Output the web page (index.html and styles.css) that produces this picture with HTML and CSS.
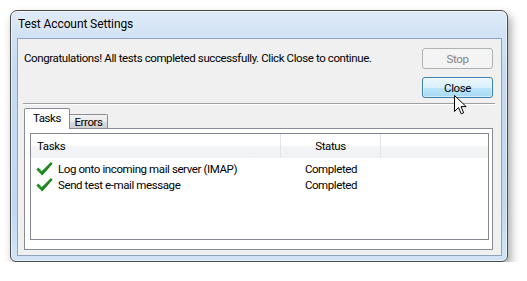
FILE: index.html
```html
<!DOCTYPE html>
<html>
<head>
<meta charset="utf-8">
<title>Test Account Settings</title>
<link rel="stylesheet" href="styles.css">
</head>
<body>
<div class="window">
  <div class="titlebar"><span class="title">Test Account Settings</span></div>
  <div class="client">
    <div class="top">
      <p class="message">Congratulations! All tests completed successfully. Click Close to continue.</p>
      <div class="buttons">
        <button class="btn" disabled>Stop</button>
        <button class="btn btn-hot">Close</button>
      </div>
    </div>
    <div class="separator"></div>
    <div class="tabs">
      <div class="tab tab-active">Tasks</div>
      <div class="tab tab-idle">Errors</div>
    </div>
    <div class="panel">
      <div class="list">
        <div class="list-head">
          <div class="hcol col-task">Tasks</div>
          <div class="hcol col-status">Status</div>
          <div class="hcol col-rest"></div>
        </div>
        <div class="rows">
          <div class="row">
            <div class="cell col-task">
              <svg class="check" width="17" height="14" viewBox="0 0 17 14"><path d="M0.3 7.6 L2.4 5.6 L5.9 9.3 L14.8 0.3 L16.6 1.8 L6.1 13.4 Z" fill="#239123"/><path d="M5.9 9.3 L14.8 0.3 L16.6 1.8 L6.1 13.4 Z" fill="#1b7d1b" opacity=".55"/></svg>
              <span>Log onto incoming mail server (IMAP)</span>
            </div>
            <div class="cell col-status">Completed</div>
          </div>
          <div class="row">
            <div class="cell col-task">
              <svg class="check" width="17" height="14" viewBox="0 0 17 14"><path d="M0.3 7.6 L2.4 5.6 L5.9 9.3 L14.8 0.3 L16.6 1.8 L6.1 13.4 Z" fill="#239123"/><path d="M5.9 9.3 L14.8 0.3 L16.6 1.8 L6.1 13.4 Z" fill="#1b7d1b" opacity=".55"/></svg>
              <span>Send test e-mail message</span>
            </div>
            <div class="cell col-status">Completed</div>
          </div>
        </div>
      </div>
    </div>
  </div>
  <svg class="cursor" width="13" height="20" viewBox="0 0 13 20"><path d="M0.5 0.5 L0.5 16.5 L4.5 12.5 L7.2 18.8 L9.6 17.8 L7 11.6 L12.2 11.6 Z" fill="#fff" stroke="#000" stroke-width="1" stroke-linejoin="miter"/></svg>
</div>
</body>
</html>
```
FILE: styles.css
```css
* { box-sizing: border-box; }

body {
  margin: 0;
  background: #ffffff;
  font-family: Roboto, "Noto Sans", sans-serif;
  font-size: 11.5px;
  letter-spacing: -0.4px;
  color: #000;
}

.window {
  position: relative;
  margin: 10px 0 0 10px;
  width: 498px;
  height: 252px;
  border: 1px solid #4a4a4a;
  border-radius: 7px 7px 6px 6px;
  background: linear-gradient(to bottom, #dfeaf7 0px, #d2e3f5 22px, #c6dbf2 60px, #c2d8f1 200px, #cfe2f6 240px);
  box-shadow: 3px 5px 10px rgba(0, 0, 0, 0.35), inset 0 0 0 1px rgba(255, 255, 255, 0.55);
  display: flex;
  flex-direction: column;
  padding: 0 5px 5px 6px;
}

.titlebar {
  height: 27px;
  display: flex;
  align-items: center;
  padding-left: 1px;
}

.title {
  font-size: 12px;
  letter-spacing: -0.1px;
  line-height: 15px;
  color: #000;
  text-shadow: 0 0 6px rgba(255, 255, 255, 0.9);
}

.client {
  flex: 1;
  border: 1px solid #8fa3bc;
  background: #f0f0f0;
  display: flex;
  flex-direction: column;
  padding: 9px 8px 5px 6px;
}

.top {
  display: flex;
  justify-content: space-between;
  align-items: flex-start;
}

.message {
  margin: 3px 0 0 0;
  line-height: 15px;
  white-space: nowrap;
}

.buttons {
  display: flex;
  flex-direction: column;
  gap: 8px;
}

.btn {
  width: 71px;
  height: 21px;
  padding: 0;
  border: 1px solid #707070;
  border-radius: 3px;
  font: inherit;
  letter-spacing: inherit;
  color: #000;
  background: linear-gradient(#f2f2f2 0%, #ebebeb 50%, #dddddd 50%, #cfcfcf 100%);
}

.btn:disabled {
  border-color: #adb2b5;
  background: #f4f4f4;
  color: #838383;
}

.btn-hot {
  border-color: #3c7fb1;
  background: linear-gradient(#eaf6fd 0%, #d9f0fc 50%, #bee6fd 50%, #a7d9f5 100%);
  box-shadow: inset 0 0 0 1px rgba(255, 255, 255, 0.5);
}

.separator {
  margin: 5px -2px 0 -1px;
  height: 2px;
  border-top: 1px solid #a0a0a0;
  border-bottom: 1px solid #ffffff;
}

.tabs {
  display: flex;
  align-items: flex-end;
  margin-top: 3px;
  margin-bottom: -1px;
}

.tab {
  border: 1px solid #898c95;
  border-bottom: none;
  line-height: 15px;
}

.tab-active {
  position: relative;
  z-index: 1;
  width: 46px;
  height: 21px;
  padding: 2px 0 0 0;
  text-align: center;
  background: #ffffff;
  border-radius: 2px 2px 0 0;
}

.tab-idle {
  width: 39px;
  height: 14px;
  margin-left: -1px;
  margin-bottom: 1px;
  padding: 0;
  text-align: center;
  line-height: 14px;
  background: linear-gradient(#f3f3f3 0%, #ebebeb 50%, #dddddd 50%, #cfcfcf 100%);
  border-radius: 0 2px 0 0;
}

.panel {
  flex: 1;
  border: 1px solid #898c95;
  background: #ffffff;
  padding: 4px 3px 9px 5px;
  display: flex;
}

.list {
  flex: 1;
  border: 1px solid #828790;
  background: #ffffff;
  display: flex;
  flex-direction: column;
}

.list-head {
  height: 24px;
  display: flex;
  background: linear-gradient(#ffffff 0%, #ffffff 45%, #f3f4f6 55%, #f1f2f4 100%);
}

.hcol {
  display: flex;
  align-items: center;
  border-right: 1px solid #e3e5e8;
  line-height: 15px;
}

.col-task {
  width: 250px;
  padding-left: 6px;
}

.col-status {
  width: 100px;
  justify-content: center;
}

.col-rest {
  flex: 1;
  border-right: none;
}

.rows {
  padding-top: 3px;
}

.row {
  display: flex;
  height: 16px;
  line-height: 16px;
}

.cell {
  display: flex;
  align-items: center;
}

.cell.col-task {
  padding-left: 5px;
}

.check {
  display: block;
  margin-right: 5px;
  flex: none;
}

.cursor {
  position: absolute;
  left: 443px;
  top: 84px;
  z-index: 5;
}
```
